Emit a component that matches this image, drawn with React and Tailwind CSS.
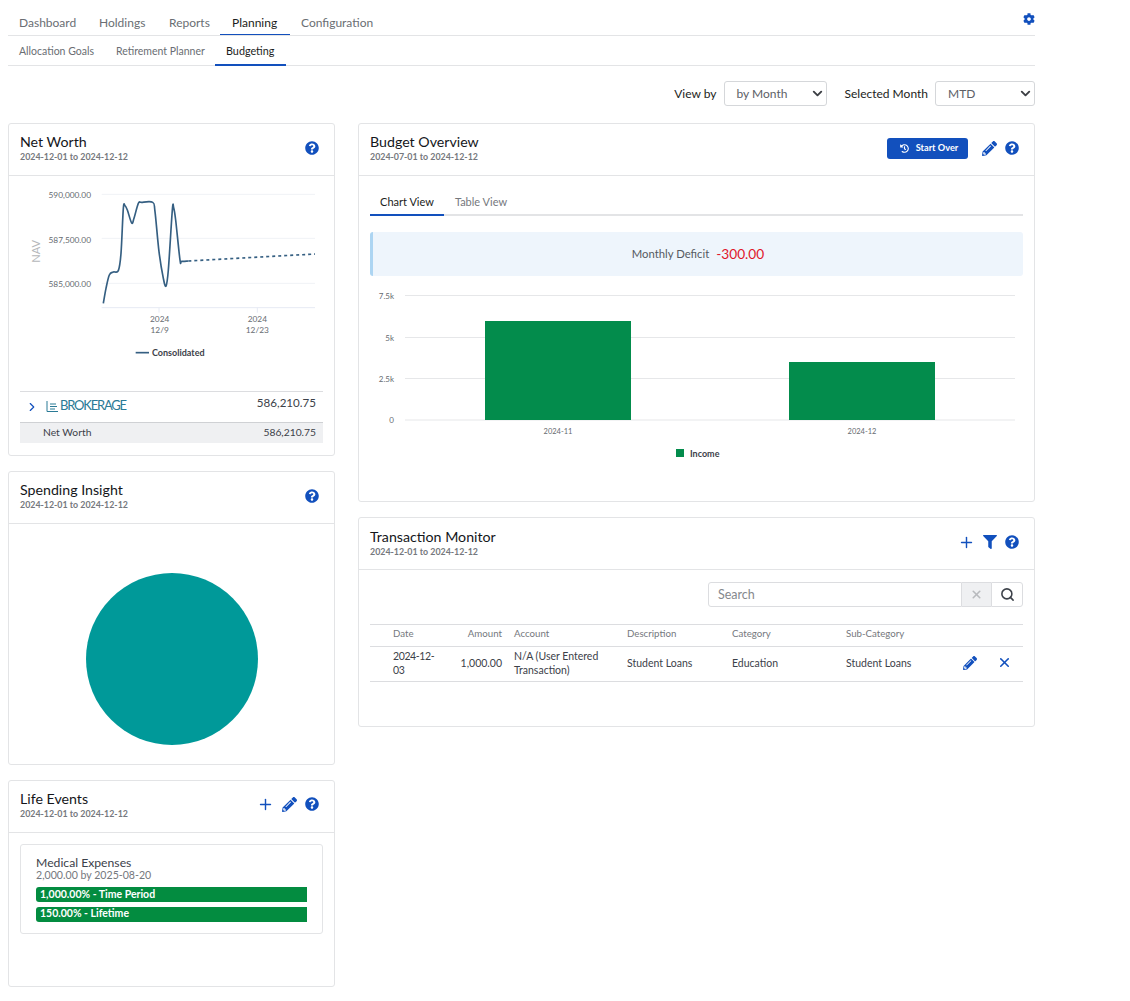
import React from 'react';
import { FaCog, FaFilter, FaHistory, FaPencilAlt, FaQuestionCircle } from 'react-icons/fa';
import { ChevronDown, ChevronRight, Plus, Search, X } from 'lucide-react';

const linePoints = [[280,370],[288,325],[298,285],[310,276],[325,272],[333,220],[340,85],[345,77],[352,90],[365,129],[372,115],[385,70],[395,67],[428,67],[435,95],[447,215],[460,295],[468,318],[475,270],[487,90],[491,83],[497,120],[510,240],[515,244],[535,243]];

const smoothPath = (pts) => {
    let d = `M${pts[0][0]} ${pts[0][1]}`;
    for (let i = 0; i < pts.length - 1; i++) {
        const p0 = pts[i - 1] || pts[i];
        const p1 = pts[i];
        const p2 = pts[i + 1];
        const p3 = pts[i + 2] || p2;
        d += ` C${p1[0] + (p2[0] - p0[0]) / 6} ${p1[1] + (p2[1] - p0[1]) / 6} ${p2[0] - (p3[0] - p1[0]) / 6} ${p2[1] - (p3[1] - p1[1]) / 6} ${p2[0]} ${p2[1]}`;
    }
    return d;
};

const Help = () => <FaQuestionCircle size={14} className="text-[#1250bd]" />;

const Card = ({ title, dates, actions, actionsClass = '', titleClass = '', className, children }) => (
    <div className={`bg-white border border-[#e3e4e6] rounded-[3px] ${className}`}>
        <div className="h-[52px] border-b border-[#e3e4e6] px-[11px] pt-[9px] flex justify-between">
            <div className={titleClass}>
                <div className="text-[14.2px] leading-[17px] text-[#14161a]">{title}</div>
                <div className="text-[8.85px] leading-[13px] font-bold text-[#75787d]">{dates}</div>
            </div>
            <div className={`flex items-center gap-[8px] h-[30px] pr-[4px] ${actionsClass}`}>{actions}</div>
        </div>
        {children}
    </div>
);

const Select = ({ value, className }) => (
    <div className={`h-[25px] border border-[#d5d7da] rounded-[3px] flex items-center justify-between pl-[12px] pr-[1px] text-[12px] text-[#5c6066] ${className}`}>
        {value}
        <ChevronDown size={15} strokeWidth={3} className="text-[#3c3f44]" />
    </div>
);

const NetWorthChart = () => (
    <div className="relative h-[215px]">
        <svg width="330" height="190" viewBox="0 0 990 570" className="absolute left-[1px] top-[4px]">
            {[43, 175, 310].map((y) => <line key={y} x1="275" x2="915" y1={y} y2={y} stroke="#f0f2f6" strokeWidth="3" />)}
            <line x1="275" x2="915" y1="383" y2="383" stroke="#e6eaf4" strokeWidth="3" />
            <line x1="447" x2="447" y1="383" y2="398" stroke="#e6eaf4" strokeWidth="3" />
            <line x1="742" x2="742" y1="383" y2="398" stroke="#e6eaf4" strokeWidth="3" />
            {[['590,000.00', 54], ['587,500.00', 188], ['585,000.00', 321]].map(([t, y]) => (
                <text key={t} x="243" y={y} textAnchor="end" fontSize="25" fill="#666b70">{t}</text>
            ))}
            <text x="78" y="214" textAnchor="middle" fontSize="33" fill="#b5b7ba" transform="rotate(-90 78 214)" dominantBaseline="central">NAV</text>
            <path d={smoothPath(linePoints)} fill="none" stroke="#355f82" strokeWidth="5" />
            <path d="M535 243 L915 222" fill="none" stroke="#355f82" strokeWidth="5" strokeDasharray="9 9" />
            {[[449, '2024', '12/9'], [742, '2024', '12/23']].map(([x, a, b]) => (
                <g key={b} fontSize="25" fill="#666b70" textAnchor="middle">
                    <text x={x} y="426">{a}</text>
                    <text x={x} y="459">{b}</text>
                </g>
            ))}
            <line x1="377" x2="417" y1="518" y2="518" stroke="#355f82" strokeWidth="5" />
            <text x="426" y="527" fontSize="27" fontWeight="700" fill="#3c4149">Consolidated</text>
        </svg>
    </div>
);

const BudgetChart = () => (
    <svg width="665" height="195" viewBox="0 0 665 195" className="block">
        {[[8.5, '7.5k'], [50.5, '5k'], [91.5, '2.5k'], [133, '0']].map(([y, t]) => (
            <g key={t}>
                <line x1="46" x2="656" y1={y} y2={y} stroke="#e6e7e9" strokeWidth="1" />
                <text x="35" y={y + 3} textAnchor="end" fontSize="8" fill="#666b70">{t}</text>
            </g>
        ))}
        <rect x="126" y="34" width="146" height="99" fill="#038c4c" />
        <rect x="430" y="75" width="146" height="58" fill="#038c4c" />
        <text x="199" y="147" textAnchor="middle" fontSize="7.5" fill="#666b70">2024-11</text>
        <text x="503" y="147" textAnchor="middle" fontSize="7.5" fill="#666b70">2024-12</text>
        <rect x="317" y="162" width="8" height="8" fill="#038c4c" />
        <text x="331" y="170" fontSize="9" fontWeight="700" fill="#3c4149">Income</text>
    </svg>
);

const App = () => (
    <div className="relative w-[1130px] h-[1001px] bg-white overflow-hidden font-[Lato,sans-serif]">
        {/* Top tabs */}
        <div className="absolute left-[8px] top-0 w-[1027px] h-[36px] border-b border-[#e3e4e6] flex items-end text-[12px] text-[#6a6e73]">
            <div className="w-[80px] pl-[11px] h-[35px] leading-[46px]">Dashboard</div>
            <div className="w-[69px] pl-[11px] h-[35px] leading-[46px]">Holdings</div>
            <div className="w-[63px] pl-[12px] h-[35px] leading-[46px]">Reports</div>
            <div className="w-[70px] pl-[12px] h-[36px] leading-[48px] text-[#1b1d21] border-b border-[#1250bd]">Planning</div>
            <div className="pl-[11px] h-[35px] leading-[46px]">Configuration</div>
            <FaCog size={12} className="absolute right-0 top-[13px] text-[#1250bd]" />
        </div>
        <div className="absolute left-[8px] top-[36px] w-[1027px] h-[30px] border-b border-[#e3e4e6] flex text-[10.5px] text-[#6a6e73]">
            <div className="w-[97px] pl-[11px] leading-[30px]">Allocation Goals</div>
            <div className="w-[110px] pl-[11px] leading-[30px]">Retirement Planner</div>
            <div className="w-[71px] pl-[11px] h-[30px] leading-[30px] text-[10.8px] text-[#1b1d21] border-b-2 border-[#1250bd]">Budgeting</div>
        </div>

        {/* Filters */}
        <div className="absolute left-[8px] top-[81px] w-[1027px] flex items-center justify-end text-[12px] text-[#1b1d21]">
            <span className="mr-[7px]">View by</span>
            <Select value="by Month" className="w-[103px] mr-[18px]" />
            <span className="mr-[7px]">Selected Month</span>
            <Select value="MTD" className="w-[100px]" />
        </div>

        {/* Left column */}
        <div className="absolute left-[8px] top-[123px] w-[327px] flex flex-col gap-[15px]">
            <Card title="Net Worth" dates="2024-12-01 to 2024-12-12" actions={<Help />} className="h-[333px]">
                <NetWorthChart />
                <div className="mx-[11px] border-t border-[#dcdde0] h-[31px] flex items-center relative">
                    <ChevronRight size={14} strokeWidth={2} className="ml-[5px] text-[#1250bd]" />
                    <span className="ml-[7px] mb-[2px] flex items-center text-[#2a7a96] text-[13px] tracking-[-1.2px]">
                        <svg width="12" height="11" viewBox="0 0 12 11" className="mr-[2px]" fill="none" stroke="#2a7a96" strokeWidth="1">
                            <path d="M1 0v10.5h11M4 3h6M4 5.5h7M4 8h5" />
                        </svg>
                        BROKERAGE
                    </span>
                    <span className="absolute right-[7px] top-[2px] text-[11.6px] text-[#3c4149]">586,210.75</span>
                </div>
                <div className="mx-[11px] h-[21px] bg-[#eff0f2] border-t border-[#cfd1d4] flex items-center justify-between pl-[23px] pr-[7px] pb-[1px] text-[10.3px] text-[#3c4149]">
                    <span>Net Worth</span>
                    <span>586,210.75</span>
                </div>
            </Card>
            <Card title="Spending Insight" dates="2024-12-01 to 2024-12-12" actions={<Help />} className="h-[294px]">
                <div className="flex justify-center pt-[49px]">
                    <div className="w-[172px] h-[172px] rounded-full bg-[#009999]" />
                </div>
            </Card>
            <Card
                title="Life Events"
                dates="2024-12-01 to 2024-12-12"
                actionsClass="-mt-[1px]"
                actions={<>
                    <Plus size={17} className="text-[#1250bd]" />
                    <FaPencilAlt size={15} className="text-[#1250bd]" />
                    <Help />
                </>}
                className="h-[207px]"
            >
                <div className="mx-[11px] mt-[11px] h-[90px] border border-[#e3e4e6] rounded-[3px] px-[15px] pt-[11px]">
                    <div className="text-[12.2px] leading-[13px] text-[#3c4149]">Medical Expenses</div>
                    <div className="text-[10.6px] leading-[13px] text-[#75787d]">2,000.00 by 2025-08-20</div>
                    <div className="mt-[5px] h-[15px] bg-[#038c40] rounded-l-[3px] text-white text-[10.5px] font-bold leading-[15px] pl-[4px]">1,000.00% - Time Period</div>
                    <div className="mt-[5px] h-[15px] bg-[#038c40] rounded-l-[3px] text-white text-[10.5px] font-bold leading-[13px] pl-[4px]">150.00% - Lifetime</div>
                </div>
            </Card>
        </div>

        {/* Right column */}
        <div className="absolute left-[358px] top-[123px] w-[677px] flex flex-col gap-[15px]">
            <Card
                title="Budget Overview"
                dates="2024-07-01 to 2024-12-12"
                actions={<>
                    <div className="w-[81px] h-[21px] mt-[1px] bg-[#1250bd] rounded-[3px] text-white text-[9.2px] font-bold flex items-center justify-center gap-[7px] mr-[6px] pl-[3px]">
                        <FaHistory size={9} />
                        <span className="-mt-[1px]">Start Over</span>
                    </div>
                    <FaPencilAlt size={15} className="text-[#1250bd]" />
                    <Help />
                </>}
                className="h-[379px]"
            >
                <div className="mx-[11px] mt-[15px] h-[25px] border-b-2 border-[#e3e4e6] flex text-[11px] text-[#75787d]">
                    <div className="w-[74px] h-[25px] text-center leading-[22px] text-[#1b1d21] border-b-2 border-[#1250bd]">Chart View</div>
                    <div className="w-[74px] text-center leading-[22px]">Table View</div>
                </div>
                <div className="mx-[11px] mt-[16px] h-[44px] bg-[#eef5fc] border-l-[3px] border-[#add5f2] rounded-[3px] flex items-center justify-center">
                    <span className="text-[11.3px] text-[#555a61] mr-[7px]">Monthly Deficit</span>
                    <span className="text-[13.7px] text-[#e0162b]">-300.00</span>
                </div>
                <div className="mt-[11px]">
                    <BudgetChart />
                </div>
            </Card>
            <Card
                title="Transaction Monitor"
                dates="2024-12-01 to 2024-12-12"
                titleClass="mt-[1px]"
                actions={<>
                    <Plus size={17} className="text-[#1250bd]" />
                    <FaFilter size={14} className="text-[#1250bd]" />
                    <Help />
                </>}
                className="h-[210px]"
            >
                <div className="flex justify-end mt-[12px] mr-[11px]">
                    <div className="w-[254px] h-[25px] border border-[#dcdde0] rounded-l-[3px] text-[12.5px] leading-[23px] text-[#85888d] pl-[9px]">Search</div>
                    <div className="w-[29px] h-[25px] bg-[#eff0f2] border-y border-[#dcdde0] flex items-center justify-center">
                        <X size={13} strokeWidth={3} className="text-[#b8babd]" />
                    </div>
                    <div className="w-[32px] h-[25px] border border-[#dcdde0] rounded-r-[3px] flex items-center justify-center">
                        <Search size={15} strokeWidth={2.5} className="text-[#3c4149]" />
                    </div>
                </div>
                <div className="mx-[11px] mt-[17px]">
                    <div className="h-[23px] border-y border-[#dcdde0] flex items-center pb-[4px] text-[9.7px] text-[#75787d]">
                        <div className="w-[23px]" />
                        <div className="w-[50px]">Date</div>
                        <div className="w-[59px] text-right">Amount</div>
                        <div className="w-[12px]" />
                        <div className="w-[113px]">Account</div>
                        <div className="w-[105px]">Description</div>
                        <div className="w-[114px]">Category</div>
                        <div>Sub-Category</div>
                    </div>
                    <div className="h-[35px] border-b border-[#dcdde0] flex items-center pb-[2px] text-[10.5px] leading-[14px] text-[#3c4149] relative">
                        <div className="w-[23px]" />
                        <div className="w-[50px] tracking-[-0.4px]">2024-12-<br />03</div>
                        <div className="w-[59px] text-right">1,000.00</div>
                        <div className="w-[12px]" />
                        <div className="w-[113px]">N/A (User Entered<br />Transaction)</div>
                        <div className="w-[105px]">Student Loans</div>
                        <div className="w-[114px]">Education</div>
                        <div>Student Loans</div>
                        <FaPencilAlt size={14} className="absolute left-[593px] top-[9px] text-[#1250bd]" />
                        <X size={15} strokeWidth={2.5} className="absolute left-[627px] top-[8px] text-[#1250bd]" />
                    </div>
                </div>
            </Card>
        </div>
    </div>
);

export default App;
